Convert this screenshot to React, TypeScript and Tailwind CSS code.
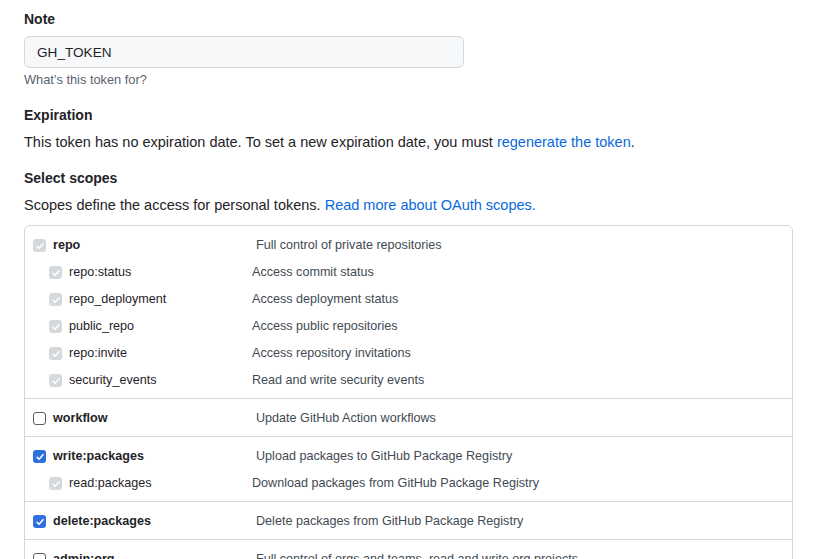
import type { ReactNode } from 'react';

type Check = 'on' | 'off' | 'locked';

type Scope = { name: string; desc: string; state: Check };

type Group = { parent: Scope; children?: Scope[] };

const GROUPS: Group[] = [
  {
    parent: { name: 'repo', desc: 'Full control of private repositories', state: 'locked' },
    children: [
      { name: 'repo:status', desc: 'Access commit status', state: 'locked' },
      { name: 'repo_deployment', desc: 'Access deployment status', state: 'locked' },
      { name: 'public_repo', desc: 'Access public repositories', state: 'locked' },
      { name: 'repo:invite', desc: 'Access repository invitations', state: 'locked' },
      { name: 'security_events', desc: 'Read and write security events', state: 'locked' }
    ]
  },
  { parent: { name: 'workflow', desc: 'Update GitHub Action workflows', state: 'off' } },
  {
    parent: { name: 'write:packages', desc: 'Upload packages to GitHub Package Registry', state: 'on' },
    children: [
      { name: 'read:packages', desc: 'Download packages from GitHub Package Registry', state: 'locked' }
    ]
  },
  { parent: { name: 'delete:packages', desc: 'Delete packages from GitHub Package Registry', state: 'on' } },
  {
    parent: {
      name: 'admin:org',
      desc: 'Full control of orgs and teams, read and write org projects',
      state: 'off'
    }
  }
];

function Box({ state }: { state: Check }) {
  if (state === 'off') {
    return <span className="block h-[13px] w-[13px] shrink-0 rounded-[3px] border border-[#5a5f66] bg-white" />;
  }
  const bg = state === 'on' ? 'bg-[#2f6fdf]' : 'bg-[#d6d9dc]';
  return (
    <span className={`flex h-[13px] w-[13px] shrink-0 items-center justify-center rounded-[3px] ${bg}`}>
      <svg viewBox="0 0 12 12" className="h-[10px] w-[10px]" fill="none">
        <path d="M2.5 6.3 4.9 8.7 9.6 3.2" stroke="white" strokeWidth="1.8" strokeLinecap="round" strokeLinejoin="round" />
      </svg>
    </span>
  );
}

function Row({ scope, child }: { scope: Scope; child?: boolean }) {
  return (
    <div className={`flex h-[27px] items-center whitespace-nowrap ${child ? 'pl-4' : ''}`}>
      <div className={`flex items-center gap-[7px] ${child ? 'w-[203px]' : 'w-[223px]'}`}>
        <Box state={scope.state} />
        <span className={child ? 'text-[#1f2328]' : 'font-bold text-[#1f2328]'}>{scope.name}</span>
      </div>
      <span className="text-[#424a53]">{scope.desc}</span>
    </div>
  );
}

function Heading({ children }: { children: ReactNode }) {
  return <div className="text-[14px] font-bold leading-[21px] text-[#1f2328]">{children}</div>;
}

export default function App() {
  return (
    <div className="h-[559px] overflow-hidden bg-white px-6 pt-[9px] font-['Liberation_Sans',Arial,sans-serif] text-[14.5px] leading-[21px] text-[#1f2328]">
      <Heading>Note</Heading>
      <div className="mt-[6px] flex h-[32px] w-[440px] items-center rounded-md border border-[#d0d7de] bg-[#f6f8fa] px-3 text-[13.6px]">
        GH_TOKEN
      </div>
      <p className="mt-[3px] text-[12.8px] leading-[18px] text-[#59636e]">What’s this token for?</p>

      <div className="mt-[16px]">
        <Heading>Expiration</Heading>
        <p className="mt-[6px]">
          This token has no expiration date. To set a new expiration date, you must{' '}
          <a className="text-[#0969da]">regenerate the token</a>.
        </p>
      </div>

      <div className="mt-[15px]">
        <Heading>Select scopes</Heading>
        <p className="mt-[6px]">
          Scopes define the access for personal tokens.{' '}
          <a className="text-[#0969da]">Read more about OAuth scopes.</a>
        </p>
      </div>

      <div className="mt-[9px] w-[769px] rounded-md border border-[#d0d7de] text-[12.6px]">
        {GROUPS.map((g) => (
          <div key={g.parent.name} className="border-b border-[#d0d7de] px-2 pt-[6px] pb-[4px] last:border-b-0">
            <Row scope={g.parent} />
            {g.children?.map((c) => (
              <Row key={c.name} scope={c} child />
            ))}
          </div>
        ))}
      </div>
    </div>
  );
}
